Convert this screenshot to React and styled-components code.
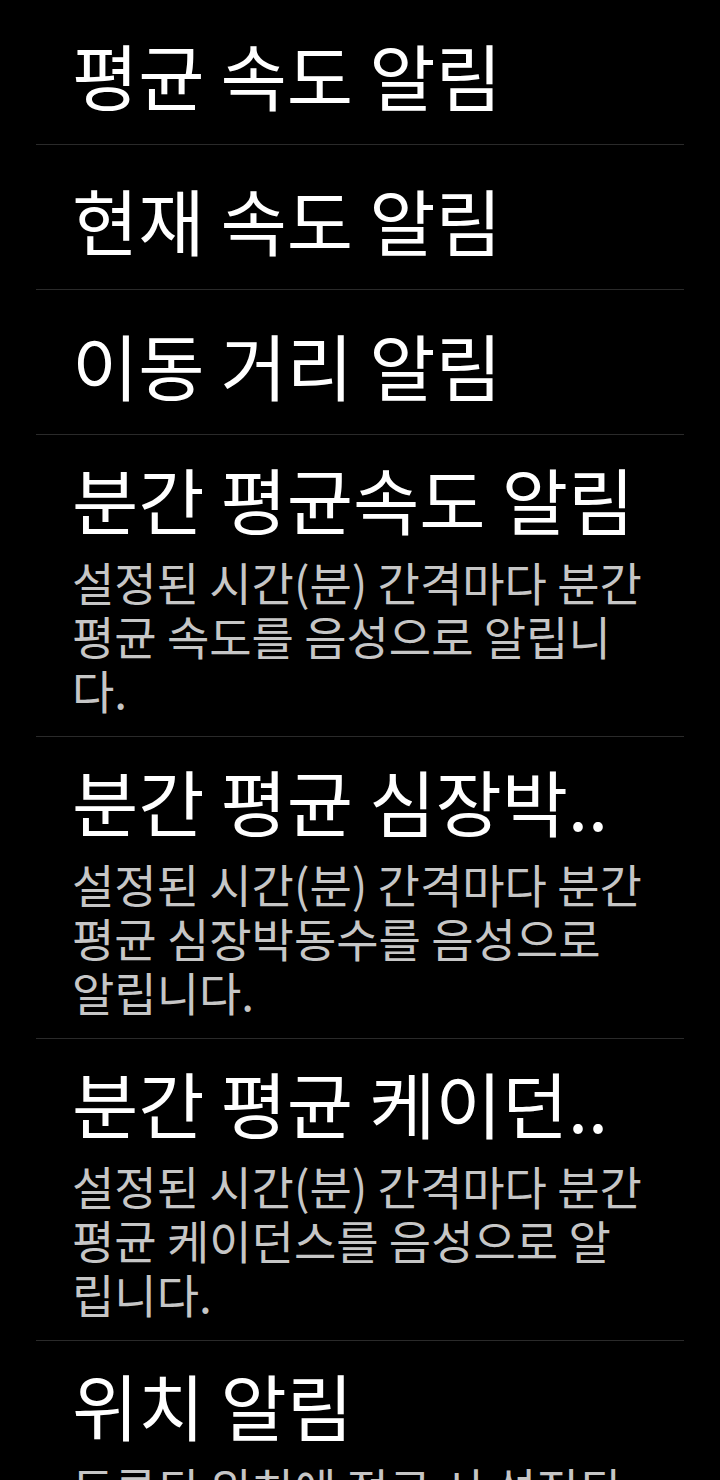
import React from "react";
import styled, { createGlobalStyle } from "styled-components";

const Global = createGlobalStyle`
  html, body {
    margin: 0;
    padding: 0;
    background: #000;
  }
  body {
    font-family: "Noto Sans CJK KR", "Noto Sans", sans-serif;
    color: #fff;
  }
`;

const List = styled.div`
  display: flex;
  flex-direction: column;
  padding: 0 36px;
`;

const Item = styled.div`
  display: flex;
  flex-direction: column;
  justify-content: center;
  min-height: 145px;
  box-sizing: border-box;
  padding: 23px 36px 20px;
  border-bottom: 1px solid #2a2a2a;
  flex-shrink: 0;
`;

const Title = styled.div`
  font-size: 72px;
  line-height: 80px;
  color: #ffffff;
  white-space: nowrap;
`;

const Desc = styled.div`
  margin-top: 16px;
  font-size: 46px;
  line-height: 54px;
  color: #c6c6c6;
`;

const items = [
  { title: "평균 속도 알림" },
  { title: "현재 속도 알림" },
  { title: "이동 거리 알림" },
  {
    title: "분간 평균속도 알림",
    desc: "설정된 시간(분) 간격마다 분간 평균 속도를 음성으로 알립니다.",
  },
  {
    title: "분간 평균 심장박..",
    desc: "설정된 시간(분) 간격마다 분간 평균 심장박동수를 음성으로 알립니다.",
  },
  {
    title: "분간 평균 케이던..",
    desc: "설정된 시간(분) 간격마다 분간 평균 케이던스를 음성으로 알립니다.",
  },
  {
    title: "위치 알림",
    desc: "등록된 위치에 접근 시 설정된 알림을 음성으로 알립니다.",
  },
];

export default function App() {
  return (
    <>
      <Global />
      <List>
        {items.map((it, i) => (
          <Item key={i}>
            <Title>{it.title}</Title>
            {it.desc && <Desc>{it.desc}</Desc>}
          </Item>
        ))}
      </List>
    </>
  );
}
